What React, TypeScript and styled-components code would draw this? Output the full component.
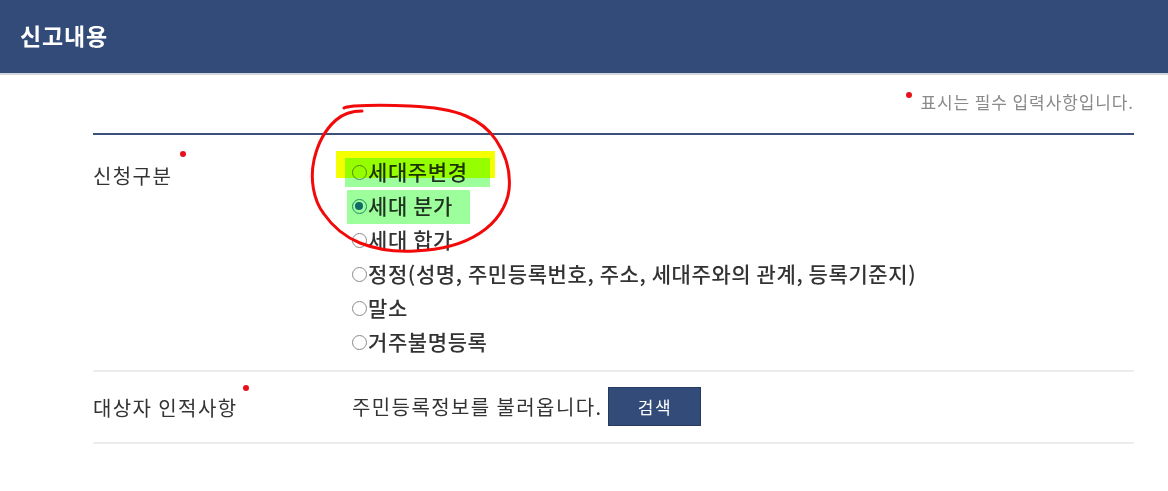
import React from "react";
import styled, { createGlobalStyle } from "styled-components";

const GlobalStyle = createGlobalStyle`
  html, body { margin: 0; padding: 0; background: #ffffff; }
  body { font-family: "Noto Sans CJK KR", "Noto Sans", sans-serif; color: #333; }
  * { box-sizing: border-box; }
`;

const Page = styled.div`
  position: relative;
  width: 1168px;
  height: 491px;
  overflow: hidden;
  background: #fff;
`;

const Header = styled.header`
  height: 75px;
  background: #334b78;
  border-bottom: 2px solid #d3d6dc;
  display: flex;
  align-items: center;
  padding-left: 20px;
  padding-bottom: 4px;
`;

const Title = styled.h2`
  margin: 0;
  font-size: 23px;
  font-weight: 700;
  color: #fff;
  letter-spacing: 0.8px;
`;

const Content = styled.div`
  padding: 0 34px 0 93px;
`;

const NoteBar = styled.div`
  height: 58px;
  display: flex;
  justify-content: flex-end;
  align-items: flex-start;
  padding-top: 14px;
`;

const Note = styled.p`
  margin: 0;
  display: flex;
  align-items: flex-start;
  font-size: 17px;
  color: #8a8a8a;
  letter-spacing: 0.9px;
`;

const Dot = styled.span<{ $mt: number; $ml: number }>`
  display: inline-block;
  width: 6px;
  height: 6px;
  border-radius: 50%;
  background: #e8101a;
  margin-top: ${(p) => p.$mt}px;
  margin-left: ${(p) => p.$ml}px;
  margin-right: 8px;
  flex: none;
`;

const Form = styled.div`
  border-top: 2px solid #3d5079;
`;

const Row = styled.div<{ $align: string; $pad: string }>`
  display: grid;
  grid-template-columns: 259px 1fr;
  align-items: ${(p) => p.$align};
  padding: ${(p) => p.$pad};
  border-bottom: 2px solid #ededed;
`;

const Label = styled.div<{ $pt: number }>`
  display: flex;
  align-items: flex-start;
  font-size: 20px;
  color: #333;
  letter-spacing: 1.4px;
  line-height: 34px;
  padding-top: ${(p) => p.$pt}px;
`;

const Options = styled.div`
  display: flex;
  flex-direction: column;
`;

const Option = styled.label`
  position: relative;
  display: flex;
  align-items: center;
  height: 34px;
  font-size: 21px;
  font-weight: 500;
  color: #333;
  letter-spacing: 0.6px;
  white-space: nowrap;
`;

const Radio = styled.span<{ $checked?: boolean }>`
  display: inline-block;
  position: relative;
  width: 15px;
  height: 15px;
  border-radius: 50%;
  border: 1.5px solid ${(p) => (p.$checked ? "#2a8c9c" : "#8a8a8a")};
  margin-right: 1px;
  margin-top: 2px;
  flex: none;
  &::after {
    content: "";
    display: ${(p) => (p.$checked ? "block" : "none")};
    position: absolute;
    left: 2px;
    top: 2px;
    width: 8px;
    height: 8px;
    border-radius: 50%;
    background: #1b6aa5;
  }
`;

const Mark = styled.span<{ $c: string; $x: number; $y: number; $w: number; $h: number }>`
  position: absolute;
  left: ${(p) => p.$x}px;
  top: ${(p) => p.$y}px;
  width: ${(p) => p.$w}px;
  height: ${(p) => p.$h}px;
  background: ${(p) => p.$c};
  mix-blend-mode: multiply;
  pointer-events: none;
`;

const Lookup = styled.div`
  display: flex;
  align-items: center;
  font-size: 20px;
  color: #333;
  letter-spacing: 1.4px;
`;

const SearchButton = styled.button`
  margin-left: 6px;
  width: 93px;
  height: 39px;
  background: #334b78;
  border: 1px solid #27395e;
  color: #fff;
  font-family: inherit;
  font-size: 17px;
  letter-spacing: 1.5px;
  cursor: pointer;
`;

const Annotation = styled.svg`
  position: absolute;
  left: 0;
  top: 0;
  pointer-events: none;
`;

const options = [
  "세대주변경",
  "세대 분가",
  "세대 합가",
  "정정(성명, 주민등록번호, 주소, 세대주와의 관계, 등록기준지)",
  "말소",
  "거주불명등록",
];

export default function App() {
  return (
    <Page>
      <GlobalStyle />
      <Header>
        <Title>신고내용</Title>
      </Header>
      <Content>
        <NoteBar>
          <Note>
            <Dot $mt={3} $ml={0} />
            표시는 필수 입력사항입니다.
          </Note>
        </NoteBar>
        <Form>
          <Row $align="start" $pad="19px 0 12px 0">
            <Label $pt={5}>
              신청구분
              <Dot $mt={-8} $ml={8} />
            </Label>
            <Options>
              {options.map((o, i) => (
                <Option key={o}>
                  <Radio $checked={i === 1} />
                  {o}
                  {i === 0 && (
                    <>
                      <Mark $c="#f4ff00" $x={-16} $y={-3} $w={159} $h={27} />
                      <Mark $c="#9cff9c" $x={-7} $y={4} $w={145} $h={29} />
                    </>
                  )}
                  {i === 1 && <Mark $c="#9cff9c" $x={-5} $y={2} $w={123} $h={34} />}
                </Option>
              ))}
            </Options>
          </Row>
          <Row $align="center" $pad="15px 0 16px 0">
            <Label $pt={2}>
              대상자 인적사항
              <Dot $mt={-6} $ml={6} />
            </Label>
            <Lookup>
              주민등록정보를 불러옵니다.
              <SearchButton type="button">검색</SearchButton>
            </Lookup>
          </Row>
        </Form>
      </Content>
      <Annotation width="1168" height="491" viewBox="0 0 1168 491">
        <path
          d="M362 111 C352 111 344 113 336 120 C327 128 318 142 314 160 C310 178 313 200 324 214 C333 227 343 236 360 243 C378 250 398 252 415 251 C440 250 462 245 480 233 C497 222 507 206 509 190 C511 172 506 155 496 140 C488 128 478 121 466 116 C452 110 436 107 410 106 C390 105 370 105 354 106 C348 107 345 107 344 108"
          fill="none"
          stroke="#f20a0a"
          strokeWidth="3"
          strokeLinecap="round"
          strokeLinejoin="round"
        />
      </Annotation>
    </Page>
  );
}
